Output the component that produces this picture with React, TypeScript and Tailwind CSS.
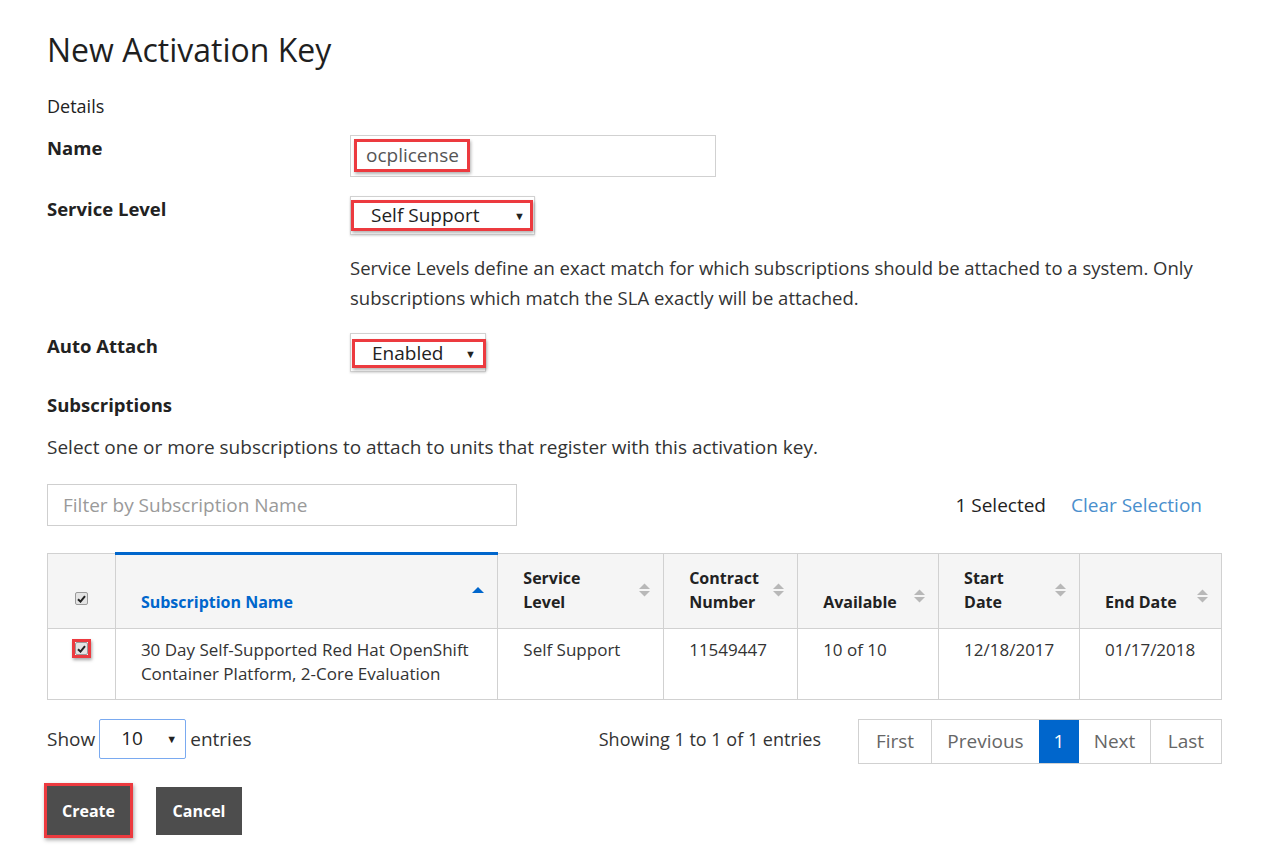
import React from "react"

const font = { fontFamily: '"Open Sans", "Liberation Sans", Arial, sans-serif' }

function SortIcon({ active }: { active?: boolean }) {
  if (active) {
    return (
      <svg width="12" height="8" viewBox="0 0 12 8" className="shrink-0">
        <path d="M0 7 L6 1 L12 7 Z" fill="#0066cc" />
      </svg>
    )
  }
  return (
    <svg width="11" height="14" viewBox="0 0 11 14" className="shrink-0">
      <path d="M0 6 L5.5 0.5 L11 6 Z" fill="#b8b8b8" />
      <path d="M0 8 L5.5 13.5 L11 8 Z" fill="#b8b8b8" />
    </svg>
  )
}

function Check({ red }: { red?: boolean }) {
  const box = (
    <div className="w-[13px] h-[13px] rounded-[2px] border border-[#9a9a9a] bg-[#e4e4e4] flex items-center justify-center">
      <svg width="9" height="8" viewBox="0 0 9 8">
        <path d="M1 4.2 L3.5 6.6 L8 1.2" stroke="#222" strokeWidth="2" fill="none" />
      </svg>
    </div>
  )
  if (!red) return box
  return (
    <div className="border-[3px] border-[#ec3a3f] shadow-[1px_2px_3px_rgba(0,0,0,0.35)] w-[19px] h-[19px] flex items-center justify-center">
      {box}
    </div>
  )
}

function Caret() {
  return <span className="text-[11px] text-[#222] leading-none">▼</span>
}

const headers = [
  { label: ["Service", "Level"], w: "w-[166px]" },
  { label: ["Contract", "Number"], w: "w-[134px]" },
  { label: ["Available"], w: "w-[141px]" },
  { label: ["Start", "Date"], w: "w-[141px]" },
  { label: ["End Date"], w: "w-[142px]" },
]

export default function App() {
  return (
    <div className="w-[1265px] h-[851px] bg-white text-[#222] pl-[47px] pt-[28px] overflow-hidden" style={font}>
      <h1 className="text-[32px] leading-[44px] font-medium text-[#1f1f1f]">New Activation Key</h1>

      <div className="mt-[22px] text-[18px] leading-[24px] font-medium text-[#222]">Details</div>

      {/* Name */}
      <div className="flex mt-[17px]">
        <div className="w-[303px] pt-[1px] text-[18.5px] leading-[24px] font-bold text-[#222]">Name</div>
        <div className="w-[366px] h-[42px] border border-[#d1d1d1] pt-[3px] pl-[3px]">
          <div className="w-[116px] h-[33px] border-[3px] border-[#ec3a3f] shadow-[1px_2px_3px_rgba(0,0,0,0.3)] pl-[9px] text-[19px] leading-[27px] text-[#555]">
            ocplicense
          </div>
        </div>
      </div>

      {/* Service Level */}
      <div className="flex mt-[19px]">
        <div className="w-[303px] pt-[1px] text-[18.5px] leading-[24px] font-bold text-[#222]">Service Level</div>
        <div>
          <div className="w-[185px] h-[39px] border border-[#d1d1d1] pt-[3px] shadow-[0_1px_2px_rgba(0,0,0,0.15)]">
            <div className="w-[182px] h-[31px] border-[3px] border-[#ec3a3f] shadow-[1px_2px_3px_rgba(0,0,0,0.3)] flex items-center justify-between pl-[17px] pr-[5px]">
              <span className="text-[19px] leading-[25px] text-[#222]">Self Support</span>
              <Caret />
            </div>
          </div>
          <p className="mt-[18px] w-[870px] text-[18.5px] leading-[30px] text-[#333]">
            Service Levels define an exact match for which subscriptions should be attached to a system. Only
            <br />
            subscriptions which match the SLA exactly will be attached.
          </p>
        </div>
      </div>

      {/* Auto Attach */}
      <div className="flex mt-[20px]">
        <div className="w-[303px] pt-[1px] text-[18.5px] leading-[24px] font-bold text-[#222]">Auto Attach</div>
        <div className="w-[136px] h-[39px] border border-[#d1d1d1] pt-[5px] pl-[1px] shadow-[0_1px_2px_rgba(0,0,0,0.15)]">
          <div className="w-[134px] h-[29px] border-[3px] border-[#ec3a3f] shadow-[1px_2px_3px_rgba(0,0,0,0.3)] flex items-center justify-between pl-[17px] pr-[7px]">
            <span className="text-[19px] leading-[25px] text-[#222]">Enabled</span>
            <Caret />
          </div>
        </div>
      </div>

      <div className="mt-[21px] text-[18.5px] leading-[24px] font-bold text-[#222]">Subscriptions</div>
      <p className="mt-[18px] text-[19px] leading-[24px] text-[#333]">
        Select one or more subscriptions to attach to units that register with this activation key.
      </p>

      {/* Filter row */}
      <div className="flex items-center mt-[25px] w-[1175px]">
        <div className="w-[470px] h-[42px] border border-[#cfcfcf] flex items-center pl-[15px] text-[19px] text-[#9a9a9a]">
          Filter by Subscription Name
        </div>
        <div className="ml-auto flex items-center pr-[20px] text-[19px]">
          <span className="text-[#222]">1 Selected</span>
          <span className="ml-[25px] text-[#4a8fcd]">Clear Selection</span>
        </div>
      </div>

      {/* Table */}
      <table className="mt-[26px] w-[1175px] border-collapse text-[16px] leading-[24px]">
        <thead>
          <tr className="bg-[#f5f5f5] h-[75px]">
            <th className="w-[68px] border border-[#d1d1d1] align-middle">
              <div className="flex justify-center pt-[15px]">
                <Check />
              </div>
            </th>
            <th className="w-[383px] border border-[#d1d1d1] border-t-[3px] border-t-[#0066cc] align-bottom text-left pl-[25px] pr-[13px] pb-[14px]">
              <div className="flex items-center justify-between">
                <span className="font-bold text-[#0066cc]">Subscription Name</span>
                <div className="-mt-[24px]">
                  <SortIcon active />
                </div>
              </div>
            </th>
            {headers.map((h) => (
              <th key={h.label.join(" ")} className={`${h.w} border border-[#d1d1d1] align-bottom text-left pl-[25px] pr-[13px] pb-[14px]`}>
                <div className="flex items-center justify-between">
                  <div className="font-bold text-[#222]">
                    {h.label.map((l) => (
                      <div key={l}>{l}</div>
                    ))}
                  </div>
                  <div className={h.label.length === 1 ? "-mt-[12px]" : "mt-[0px]"}>
                    <SortIcon />
                  </div>
                </div>
              </th>
            ))}
          </tr>
        </thead>
        <tbody>
          <tr className="h-[71px] text-[#333] text-[17px] align-top">
            <td className="border border-[#d1d1d1]">
              <div className="flex justify-center pt-[10px]">
                <Check red />
              </div>
            </td>
            <td className="border border-[#d1d1d1] pl-[25px] pt-[9px]">
              30 Day Self-Supported Red Hat OpenShift
              <br />
              Container Platform, 2-Core Evaluation
            </td>
            <td className="border border-[#d1d1d1] pl-[25px] pt-[9px]">Self Support</td>
            <td className="border border-[#d1d1d1] pl-[25px] pt-[9px]">11549447</td>
            <td className="border border-[#d1d1d1] pl-[25px] pt-[9px]">10 of 10</td>
            <td className="border border-[#d1d1d1] pl-[25px] pt-[9px]">12/18/2017</td>
            <td className="border border-[#d1d1d1] pl-[25px] pt-[9px]">01/17/2018</td>
          </tr>
        </tbody>
      </table>

      {/* Footer */}
      <div className="flex items-center mt-[19px] w-[1175px] text-[19px] text-[#333]">
        <span className="-mt-[4px]">Show</span>
        <div className="ml-[4px] -mt-[6px] w-[87px] h-[40px] border border-[#7aaaf0] rounded-[2px] flex items-center justify-between pl-[21px] pr-[8px]">
          <span className="text-[#222]">10</span>
          <Caret />
        </div>
        <span className="ml-[4px] -mt-[4px]">entries</span>
        <span className="ml-auto mr-[37px] text-[18px] -mt-[4px]">Showing 1 to 1 of 1 entries</span>
        <div className="flex h-[45px] border border-[#d1d1d1] text-[19px] text-[#666]">
          <div className="w-[72px] flex items-center justify-center">First</div>
          <div className="w-[108px] flex items-center justify-center border-l border-[#d1d1d1]">Previous</div>
          <div className="w-[40px] flex items-center justify-center bg-[#0066cc] text-white">1</div>
          <div className="w-[71px] flex items-center justify-center">Next</div>
          <div className="w-[71px] flex items-center justify-center border-l border-[#d1d1d1]">Last</div>
        </div>
      </div>

      {/* Buttons */}
      <div className="flex items-center mt-[19px] -ml-[3px]">
        <div className="border-[3px] border-[#ec3a3f] shadow-[1px_2px_4px_rgba(0,0,0,0.35)]">
          <button className="w-[83px] h-[49px] bg-[#4d4d4d] text-white font-bold text-[16px]">Create</button>
        </div>
        <button className="ml-[23px] w-[86px] h-[48px] bg-[#4d4d4d] text-white font-bold text-[16px]">Cancel</button>
      </div>
    </div>
  )
}
